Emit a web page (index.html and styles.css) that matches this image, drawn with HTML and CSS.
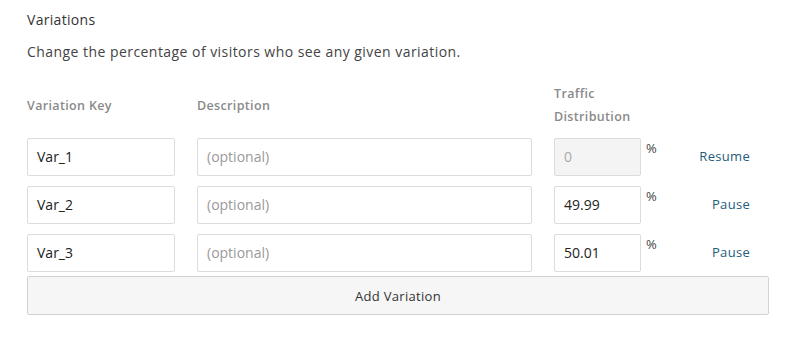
FILE: index.html
```html
<!DOCTYPE html>
<html>
<head>
<meta charset="utf-8">
<link rel="stylesheet" href="styles.css">
</head>
<body>
<div class="panel">
  <h2 class="title">Variations</h2>
  <p class="intro">Change the percentage of visitors who see any given variation.</p>
  <div class="grid">
    <div class="head">Variation Key</div>
    <div class="head">Description</div>
    <div class="head head-traffic">Traffic<br>Distribution</div>
    <div></div>

    <div class="field">Var_1</div>
    <div class="field placeholder">(optional)</div>
    <div class="traffic"><div class="field disabled">0</div><span class="pct">%</span></div>
    <a class="action">Resume</a>

    <div class="field">Var_2</div>
    <div class="field placeholder">(optional)</div>
    <div class="traffic"><div class="field">49.99</div><span class="pct">%</span></div>
    <a class="action">Pause</a>

    <div class="field">Var_3</div>
    <div class="field placeholder">(optional)</div>
    <div class="traffic"><div class="field">50.01</div><span class="pct">%</span></div>
    <a class="action">Pause</a>
  </div>
  <button class="add">Add Variation</button>
</div>
</body>
</html>
```

FILE: styles.css
```css
body {
  margin: 0;
  background: #fff;
  font-family: "Open Sans", Lato, sans-serif;
  color: #333;
}
.panel {
  width: 742px;
  padding: 10px 0 0 27px;
}
.title {
  margin: 0;
  font-size: 14px;
  font-weight: 400;
  line-height: 20px;
  letter-spacing: 0.3px;
  color: #333;
}
.intro {
  margin: 12px 0 0;
  font-size: 14px;
  line-height: 20px;
  letter-spacing: 0.45px;
  color: #444;
}
.grid {
  margin-top: 20px;
  display: grid;
  grid-template-columns: 148px 335px 123px 1fr;
  column-gap: 22px;
  row-gap: 10px;
  align-items: start;
}
.head {
  font-size: 12.5px;
  font-weight: 600;
  color: #8a8a8a;
  line-height: 23px;
  letter-spacing: 0.35px;
  align-self: center;
}
.field {
  box-sizing: border-box;
  height: 38px;
  border: 1px solid #dcdcdc;
  border-radius: 2px;
  padding: 0 9px;
  font-size: 14px;
  line-height: 36px;
  color: #222;
  background: #fff;
}
.placeholder {
  color: #999;
}
.disabled {
  background: #f4f4f4;
  color: #aaa;
}
.traffic {
  display: flex;
  align-items: flex-start;
}
.traffic .field {
  width: 87px;
}
.pct {
  margin: 3px 0 0 5px;
  font-size: 13px;
  line-height: 14px;
  color: #444;
}
.action {
  justify-self: end;
  margin-right: 19px;
  font-size: 13px;
  line-height: 36px;
  letter-spacing: 0.3px;
  color: #1f5b7a;
}
.add {
  display: block;
  box-sizing: border-box;
  width: 742px;
  height: 39px;
  margin-top: 4px;
  border: 1px solid #d2d2da;
  border-radius: 2px;
  background: #f6f6f6;
  font-family: "Open Sans", Lato, sans-serif;
  font-size: 13px;
  letter-spacing: 0.3px;
  color: #333;
}
```
